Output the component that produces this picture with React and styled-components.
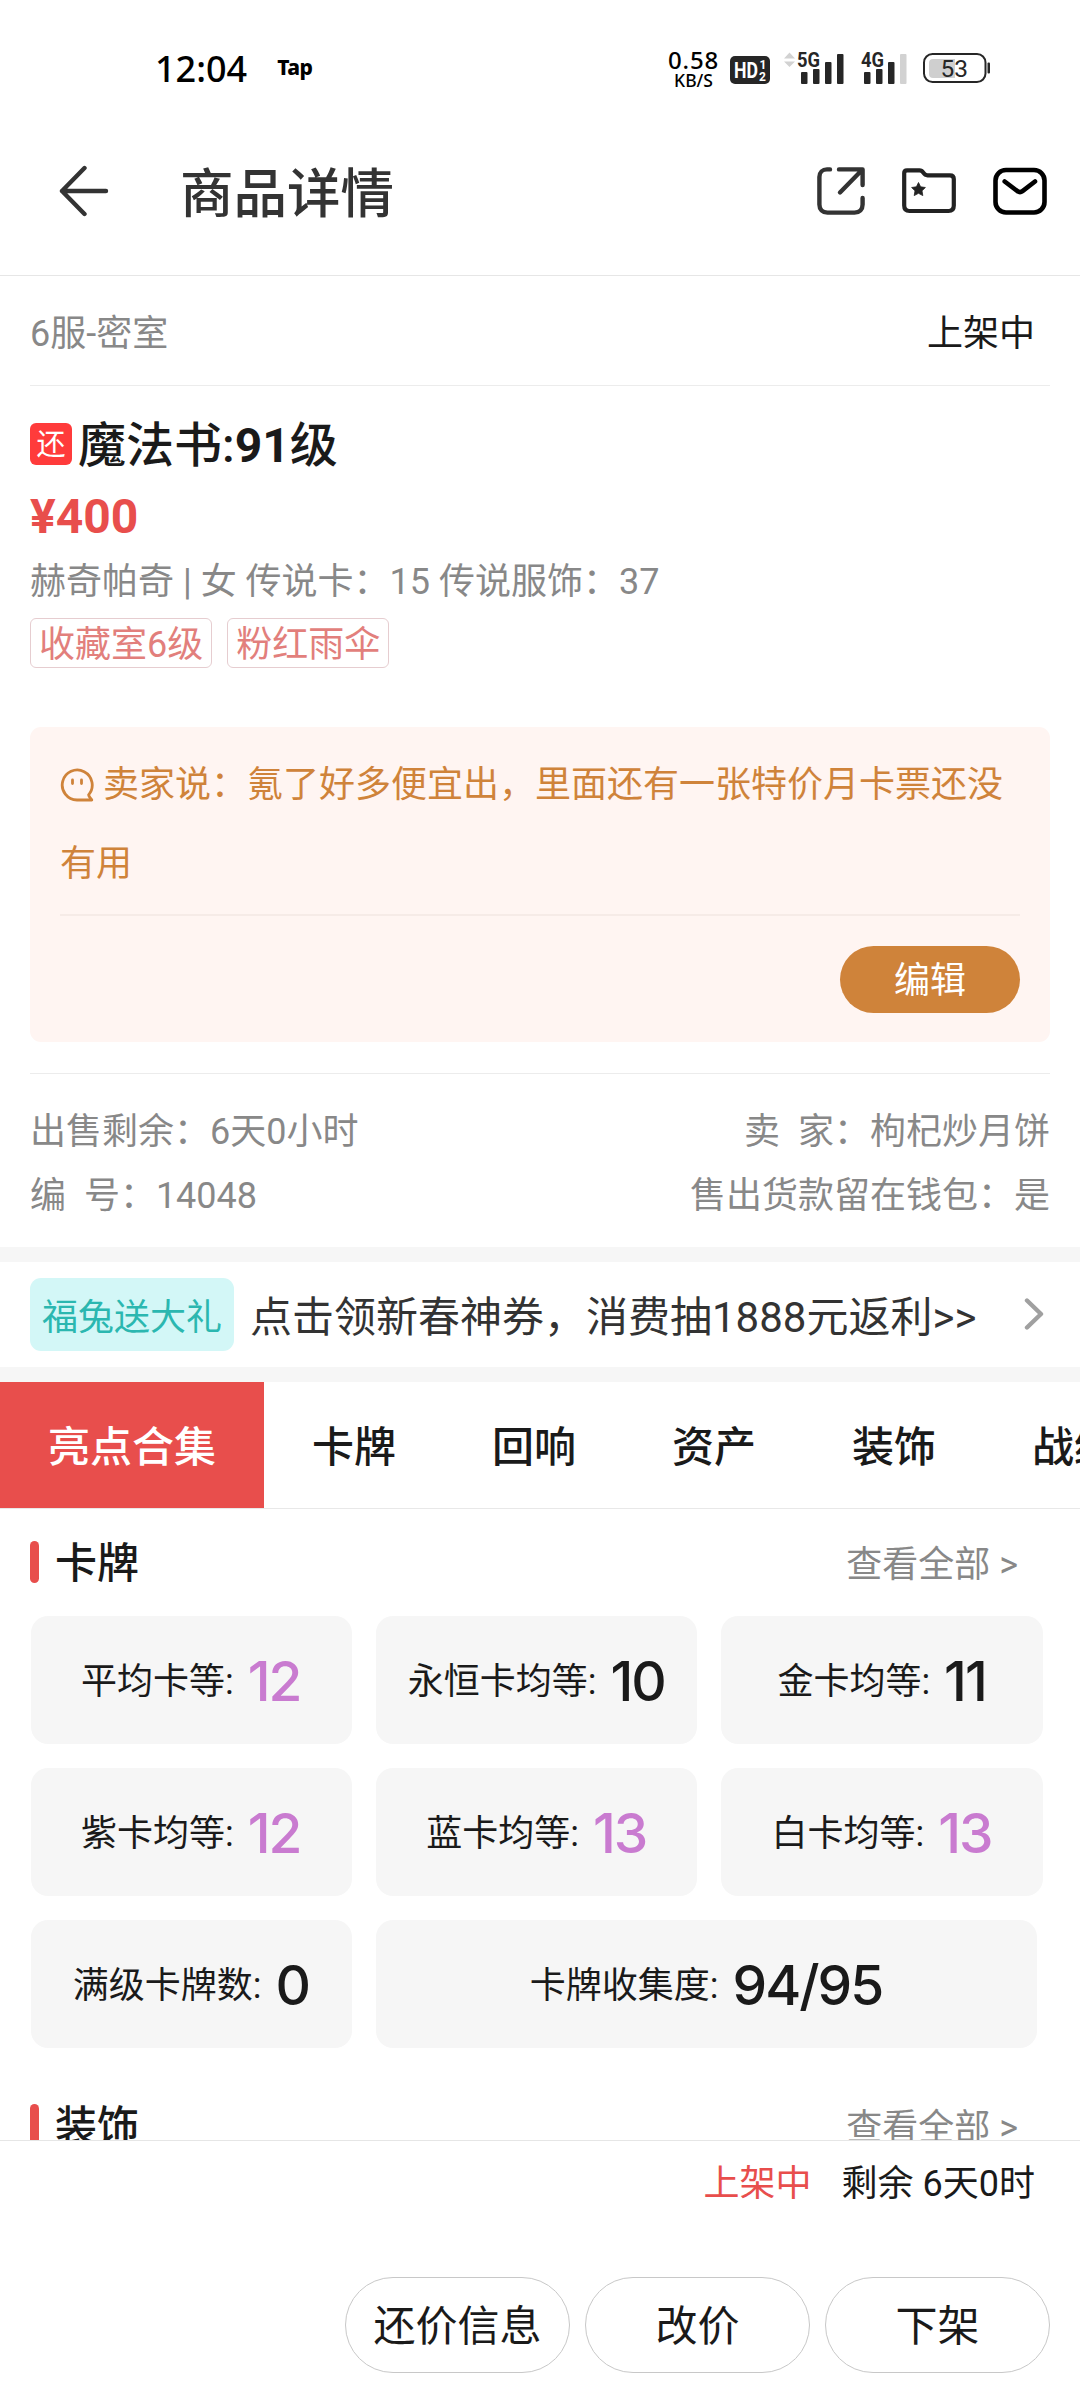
import React from 'react';
import styled, { createGlobalStyle } from 'styled-components';

const tabs = ['亮点合集', '卡牌', '回响', '资产', '装饰', '战绩'];

const cardStats = [
  { label: '平均卡等:', value: '12', highlight: true },
  { label: '永恒卡均等:', value: '10' },
  { label: '金卡均等:', value: '11' },
  { label: '紫卡均等:', value: '12', highlight: true },
  { label: '蓝卡均等:', value: '13', highlight: true },
  { label: '白卡均等:', value: '13', highlight: true },
  { label: '满级卡牌数:', value: '0' },
  { label: '卡牌收集度:', value: '94/95', wide: true },
];

const StatusIcons = () => (
  <>
    <StatusSvg width="40" height="38" $left={12}>
      <rect x="0" y="6" width="40" height="28" rx="5" fill="#262626" />
      <text x="4" y="28" fontSize="22" fontWeight="700" fill="#fff" textLength="24" lengthAdjust="spacingAndGlyphs">HD</text>
      <text x="29.5" y="18.5" fontSize="12" fontWeight="700" fill="#fff">1</text>
      <text x="29" y="30.5" fontSize="12" fontWeight="700" fill="#fff">2</text>
    </StatusSvg>
    <StatusSvg width="61" height="38" $left={14}>
      <path d="M0 8.5 L5.5 2.5 L11 8.5Z M0 11.5 L5.5 17 L11 11.5Z" fill="#d2d2d2" />
      <text x="13" y="17" fontSize="21" fontWeight="700" fill="#262626" textLength="23" lengthAdjust="spacingAndGlyphs">5G</text>
      <rect x="17" y="22" width="6.5" height="12" rx="1" fill="#262626" />
      <rect x="29" y="19" width="6.5" height="15" rx="1" fill="#262626" />
      <rect x="41" y="12" width="6.5" height="22" rx="1" fill="#262626" />
      <rect x="53" y="4" width="6.5" height="30" rx="1" fill="#262626" />
    </StatusSvg>
    <StatusSvg width="47" height="38" $left={16}>
      <text x="0" y="17" fontSize="21" fontWeight="700" fill="#262626" textLength="23" lengthAdjust="spacingAndGlyphs">4G</text>
      <rect x="3" y="22" width="6.5" height="12" rx="1" fill="#262626" />
      <rect x="15" y="19" width="6.5" height="15" rx="1" fill="#262626" />
      <rect x="27" y="12" width="6.5" height="22" rx="1" fill="#262626" />
      <rect x="39" y="4" width="6.5" height="30" rx="1" fill="#d2d2d2" />
    </StatusSvg>
    <StatusSvg width="68" height="38" $left={15}>
      <path d="M10 9 H32 V28 H10 a4 4 0 0 1 -4 -4 V13 a4 4 0 0 1 4 -4Z" fill="#cfcfcf" />
      <rect x="1" y="4" width="61.5" height="28" rx="8.5" fill="none" stroke="#262626" strokeWidth="2" />
      <rect x="64.5" y="12.5" width="2.5" height="11" rx="1" fill="#262626" />
      <text x="17.5" y="27" fontSize="24.5" fill="#262626">53</text>
    </StatusSvg>
  </>
);

const BackIcon = () => (
  <svg width="50" height="52" viewBox="0 0 50 52" fill="none" stroke="#333" strokeWidth="4.4" strokeLinecap="round" strokeLinejoin="round">
    <path d="M47 26 H3 M25.5 3 L3 26 L25.5 49" />
  </svg>
);

const ShareIcon = () => (
  <svg width="48" height="48" viewBox="0 0 48 48" fill="none" stroke="#333" strokeWidth="4.4" strokeLinecap="round" strokeLinejoin="round">
    <path d="M13 2.4 H10 C5.5 2.4 2.4 5.5 2.4 10 V37.5 C2.4 42.5 5.5 45.6 10.5 45.6 H37.5 C42.5 45.6 45.6 42.5 45.6 37.5 V31" />
    <path d="M22 2.4 H45.6 V18 M44.5 3.5 L23 25.5" />
  </svg>
);

const FolderIcon = () => (
  <svg width="54" height="46" viewBox="0 0 54 46" fill="none" stroke="#222" strokeWidth="4.2" strokeLinejoin="round">
    <path d="M5 2.3 H17.5 C19.5 2.3 20.3 3.2 21.3 4.7 C22.3 6.2 23.5 7.3 25.5 7.3 H48 C50.7 7.3 51.8 8.6 51.8 11 V37.5 C51.8 41 50 43 46.5 43 H7.5 C4 43 2.2 41 2.2 37.5 V5 C2.2 3.3 3.3 2.3 5 2.3Z" />
    <path
      d="M16.5 14.5 L18.6 18.8 L23.4 19.5 L20 22.8 L20.8 27.6 L16.5 25.3 L12.2 27.6 L13 22.8 L9.6 19.5 L14.4 18.8Z"
      fill="#222"
      strokeWidth="0.8"
    />
  </svg>
);

const MailIcon = () => (
  <svg width="54" height="48" viewBox="0 0 54 48" fill="none" stroke="#000" strokeWidth="4.6" strokeLinecap="round" strokeLinejoin="round">
    <rect x="2.5" y="3" width="49" height="42.5" rx="10.5" />
    <path d="M11.7 14.5 L24.5 24.2 C26.2 25.5 27.8 25.5 29.5 24.2 L42 14.5" />
  </svg>
);

const SellerIcon = () => (
  <BubbleSvg width="34" height="34" viewBox="0 0 34 34" fill="none" stroke="#cf833a" strokeWidth="2.8" strokeLinecap="round" strokeLinejoin="round">
    <path d="M17 32 H31.8 C31.2 30.2 29 29.8 28.6 26.8 A15 15 0 1 0 17 32Z" />
    <path d="M12.5 12 V15.5 M21.5 12 V15.5" />
  </BubbleSvg>
);

const App = () => {
  return (
    <>
      <GlobalStyle />
      <Screen>
        <StatusBar>
          <Clock>12:04</Clock>
          <Carrier>Tap</Carrier>
          <NetSpeed>
            <SpeedValue>0.58</SpeedValue>
            <SpeedUnit>KB/S</SpeedUnit>
          </NetSpeed>
          <StatusIcons />
        </StatusBar>

        <NavBar>
          <BackIcon />
          <NavTitle>商品详情</NavTitle>
          <NavActions>
            <ShareIcon />
            <FolderIcon />
            <MailIcon />
          </NavActions>
        </NavBar>

        <Content>
          <Detail>
            <ServerRow>
              <Server>6服-密室</Server>
              <SaleState>上架中</SaleState>
            </ServerRow>
            <TitleRow>
              <Bargain>还</Bargain>
              <Title>魔法书:<b>91</b>级</Title>
            </TitleRow>
            <Price>¥400</Price>
            <Summary>赫奇帕奇 | 女 传说卡：15 传说服饰：37</Summary>
            <Tags>
              <Tag>收藏室6级</Tag>
              <Tag>粉红雨伞</Tag>
            </Tags>
            <SellerBox>
              <SellerText>
                <SellerIcon />
                卖家说：氪了好多便宜出，里面还有一张特价月卡票还没有用
              </SellerText>
              <SellerDivider />
              <EditButton>编辑</EditButton>
            </SellerBox>
            <InfoList>
              <InfoRow>
                <span>出售剩余：6天0小时</span>
                <span>卖{'\u00a0\u00a0'}家：枸杞炒月饼</span>
              </InfoRow>
              <InfoRow>
                <span>编{'\u00a0\u00a0'}号：14048</span>
                <span>售出货款留在钱包：是</span>
              </InfoRow>
            </InfoList>
          </Detail>

          <Promo>
            <PromoBadge>福兔送大礼</PromoBadge>
            <PromoText>点击领新春神券，消费抽1888元返利&gt;&gt;</PromoText>
            <svg width="20" height="34" viewBox="0 0 20 34" fill="none" stroke="#a0a0a0" strokeWidth="4.4" strokeLinecap="round" strokeLinejoin="round">
              <path d="M3 2.5 L17 16 L3 29.5" />
            </svg>
          </Promo>

          <TabBar>
            {tabs.map((tab, index) => (
              <Tab key={tab} $active={index === 0}>{tab}</Tab>
            ))}
          </TabBar>

          <Section>
            <SectionHeader>
              <SectionTitle>卡牌</SectionTitle>
              <MoreLink>查看全部 &gt;</MoreLink>
            </SectionHeader>
            <StatList>
              {cardStats.map((stat) => (
                <StatCard key={stat.label} $wide={stat.wide}>
                  <StatLabel>{stat.label}</StatLabel>
                  <StatValue $highlight={stat.highlight}>{stat.value}</StatValue>
                </StatCard>
              ))}
            </StatList>
          </Section>

          <Section>
            <SectionHeader>
              <SectionTitle>装饰</SectionTitle>
              <MoreLink>查看全部 &gt;</MoreLink>
            </SectionHeader>
          </Section>
        </Content>

        <Footer>
          <FooterState>
            <OnSale>上架中</OnSale>
            <span>剩余 6天0时</span>
          </FooterState>
          <FooterActions>
            <ActionButton>还价信息</ActionButton>
            <ActionButton>改价</ActionButton>
            <ActionButton>下架</ActionButton>
          </FooterActions>
        </Footer>
      </Screen>
    </>
  );
};

export default App;

// Styled Components
const GlobalStyle = createGlobalStyle`
  * {
    box-sizing: border-box;
  }

  body {
    margin: 0;
    background: #fff;
    font-family: Roboto, "Noto Sans CJK SC", sans-serif;
    font-size: 36px;
    color: #1a1a1a;
  }

  button {
    font-family: inherit;
    font-size: inherit;
    padding: 0;
    border: none;
  }

  svg {
    flex-shrink: 0;
  }
`;

const Screen = styled.div`
  display: flex;
  flex-direction: column;
  width: 1080px;
  height: 2400px;
  background: #fff;
  overflow: hidden;
`;

const StatusBar = styled.div`
  display: flex;
  align-items: center;
  flex-shrink: 0;
  height: 106px;
  padding: 32px 89px 0 155px;
  font-family: "Noto Sans", sans-serif;
  color: #000;
`;

const Clock = styled.div`
  font-size: 36px;
  font-weight: 500;
  line-height: 40px;
`;

const Carrier = styled.div`
  margin-left: 30px;
  margin-bottom: 4px;
  font-size: 21px;
  font-weight: 800;
  line-height: 24px;
  letter-spacing: -0.5px;
`;

const NetSpeed = styled.div`
  margin-left: auto;
  margin-right: -1px;
  text-align: center;
  font-weight: 500;
`;

const SpeedValue = styled.div`
  font-size: 24px;
  line-height: 21px;
  letter-spacing: 0.8px;
`;

const SpeedUnit = styled.div`
  font-size: 17.5px;
  line-height: 20px;
`;

const StatusSvg = styled.svg`
  margin-left: ${({ $left }) => $left}px;
  font-family: Roboto, sans-serif;
  overflow: visible;
`;

const NavBar = styled.div`
  display: flex;
  align-items: center;
  flex-shrink: 0;
  height: 170px;
  padding: 0 33px 0 59px;
  border-bottom: 1px solid #e6e6e6;
`;

const NavTitle = styled.h1`
  margin: 9px 0 0 71px;
  font-size: 53.5px;
  font-weight: 500;
  line-height: 60px;
  color: #333;
`;

const NavActions = styled.div`
  display: flex;
  align-items: center;
  gap: 37px;
  margin-left: auto;
`;

const Content = styled.div`
  flex: 1;
  min-height: 0;
  overflow: hidden;
`;

const Detail = styled.div`
  padding: 0 30px 19px;
`;

const ServerRow = styled.div`
  display: flex;
  align-items: center;
  justify-content: space-between;
  height: 110px;
  padding: 7px 15px 0 0;
  border-bottom: 1px solid #ececec;
  line-height: 44px;
`;

const Server = styled.span`
  color: #888;
`;

const SaleState = styled.span`
  color: #1a1a1a;
`;

const TitleRow = styled.div`
  display: flex;
  align-items: center;
  height: 48px;
  margin-top: 34px;
`;

const Bargain = styled.span`
  width: 42px;
  height: 42px;
  padding-top: 1px;
  border-radius: 6px;
  background: #ff3b3b;
  color: #fff;
  font-size: 29px;
  line-height: 42px;
  text-align: center;
`;

const Title = styled.h2`
  margin: 4px 0 0 6px;
  font-size: 48px;
  font-weight: 500;
  line-height: 48px;

  b {
    font-weight: 700;
  }
`;

const Price = styled.div`
  margin-top: 25px;
  font-size: 48px;
  font-weight: 700;
  line-height: 48px;
  color: #e84e4c;
`;

const Summary = styled.div`
  margin-top: 19px;
  line-height: 44px;
  color: #888;
`;

const Tags = styled.div`
  display: flex;
  gap: 15px;
  margin-top: 14px;
`;

const Tag = styled.span`
  height: 50px;
  padding: 2px 8px 0;
  border: 1px solid #e6cdd0;
  border-radius: 6px;
  line-height: 48px;
  color: #e27f7c;
`;

const SellerBox = styled.div`
  height: 315px;
  margin-top: 59px;
  padding: 19px 30px 0;
  border-radius: 11px;
  background: #fff5f2;
`;

const SellerText = styled.p`
  margin: 0;
  line-height: 78.5px;
  color: #cf833a;
`;

const BubbleSvg = styled.svg`
  margin-right: 9px;
  vertical-align: -5px;
`;

const SellerDivider = styled.div`
  height: 2px;
  margin-top: 11px;
  background: #f6ebe7;
`;

const EditButton = styled.button`
  display: block;
  width: 180px;
  height: 67px;
  margin: 30px 0 0 auto;
  padding-top: 4px;
  border-radius: 34px;
  background: #cf833a;
  color: #fff;
  line-height: 63px;
`;

const InfoList = styled.div`
  margin-top: 31px;
  padding-top: 26px;
  border-top: 1px solid #ececec;
`;

const InfoRow = styled.div`
  display: flex;
  justify-content: space-between;
  line-height: 64px;
  color: #888;
`;

const Promo = styled.div`
  display: flex;
  align-items: center;
  height: 135px;
  padding: 0 36px 0 30px;
  border-top: 15px solid #f6f6f6;
  border-bottom: 15px solid #f6f6f6;
`;

const PromoBadge = styled.span`
  height: 73px;
  padding: 4px 12px 0;
  border-radius: 11px;
  background: #d3f7f7;
  color: #2bb7b0;
  line-height: 73px;
`;

const PromoText = styled.span`
  flex: 1;
  margin: 6px 0 0 16px;
  font-size: 42px;
  line-height: 50px;
  color: #333;
  white-space: nowrap;
`;

const TabBar = styled.div`
  display: flex;
  height: 127px;
  border-bottom: 1px solid #e8e8e8;
  overflow: hidden;
`;

const Tab = styled.div`
  flex-shrink: 0;
  height: 126px;
  padding: 3px 48px 0;
  font-size: 42px;
  font-weight: 500;
  line-height: 126px;
  background: ${({ $active }) => ($active ? '#e84e4c' : 'transparent')};
  color: ${({ $active }) => ($active ? '#fff' : '#1a1a1a')};
`;

const Section = styled.section`
  padding: 32px 30px 24px;
`;

const SectionHeader = styled.div`
  display: flex;
  align-items: center;
  justify-content: space-between;
  height: 42px;
  padding-right: 32px;

  &::before {
    content: '';
    width: 9px;
    height: 42px;
    border-radius: 4.5px;
    background: #e84e4c;
  }
`;

const SectionTitle = styled.h3`
  flex: 1;
  margin: 3px 0 0 16px;
  font-size: 42px;
  font-weight: 500;
  line-height: 42px;
`;

const MoreLink = styled.span`
  margin-top: 6px;
  line-height: 42px;
  color: #888;
`;

const StatList = styled.div`
  display: flex;
  flex-wrap: wrap;
  gap: 24px;
  margin: 33px -24px 0 0.6px;
`;

const StatCard = styled.div`
  display: flex;
  align-items: center;
  justify-content: center;
  gap: 14px;
  width: ${({ $wide }) => ($wide ? 661 : 321.4)}px;
  height: 128px;
  padding-right: 1px;
  border-radius: 17px;
  background: #f6f6f6;
`;

const StatLabel = styled.span`
  margin-top: 4px;
  line-height: 44px;
`;

const StatValue = styled.span`
  margin-top: 1px;
  font-family: Inter, sans-serif;
  font-size: 55px;
  font-weight: 500;
  line-height: 60px;
  letter-spacing: -2px;
  color: ${({ $highlight }) => ($highlight ? '#c97bd0' : '#1a1a1a')};
`;

const Footer = styled.div`
  flex-shrink: 0;
  height: 260px;
  padding: 20px 30px 0;
  border-top: 1px solid #e6e6e6;
  background: #fff;
`;

const FooterState = styled.div`
  display: flex;
  justify-content: flex-end;
  gap: 30px;
  padding-right: 15px;
  line-height: 46px;
`;

const OnSale = styled.span`
  color: #e84e4c;
`;

const FooterActions = styled.div`
  display: flex;
  justify-content: flex-end;
  gap: 15px;
  margin-top: 70px;
`;

const ActionButton = styled.button`
  width: 225px;
  height: 96px;
  padding-top: 4px;
  border: 1px solid #c8c8c8;
  border-radius: 48px;
  background: #fff;
  color: #1a1a1a;
  font-size: 42px;
  line-height: 90px;
`;
